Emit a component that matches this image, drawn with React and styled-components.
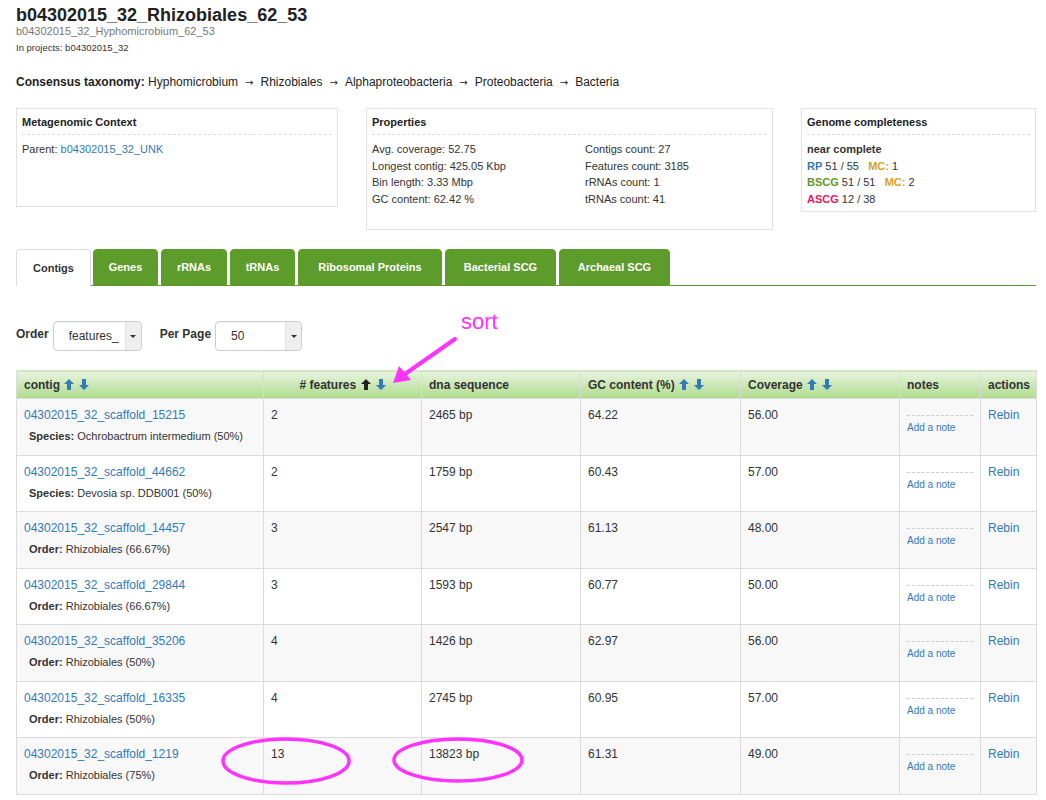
import React from "react";
import styled, { createGlobalStyle } from "styled-components";

const Global = createGlobalStyle`
  html, body { margin: 0; padding: 0; background: #fff; }
  body { font-family: "Liberation Sans", Arial, sans-serif; color: #333; font-size: 12px; }
  * { box-sizing: border-box; }
`;

const Page = styled.div`
  position: relative;
  width: 1046px;
  padding: 0 10px 0 16px;
`;

const Title = styled.h1`
  margin: 0;
  padding-top: 4px;
  font-size: 18px;
  font-weight: bold;
  line-height: 22px;
  color: #222;
`;

const Subtitle = styled.div`
  font-size: 11px;
  color: #777;
  line-height: 14px;
  margin-top: -2px;
`;

const Projects = styled.div`
  font-size: 9.5px;
  color: #333;
  line-height: 14px;
  margin-top: 3px;
`;

const Taxonomy = styled.div`
  margin-top: 19px;
  font-size: 12px;
  line-height: 16px;
  color: #222;
  b { font-weight: bold; }
`;

const Arrow = styled.span`
  margin: 0 7px;
  font-family: "DejaVu Sans", sans-serif;
  font-size: 10px;
`;

const Panels = styled.div`
  display: flex;
  align-items: flex-start;
  gap: 28px;
  margin-top: 17px;
`;

const Panel = styled.div`
  width: ${(p) => p.$w}px;
  height: ${(p) => p.$h}px;
  border: 1px solid #e2e2e2;
  padding: 6px 5px;
`;

const PanelTitle = styled.div`
  font-weight: bold;
  font-size: 11px;
  color: #222;
  padding-bottom: 4px;
  border-bottom: 1px dashed #ddd;
  margin-bottom: 6px;
  line-height: 15px;
`;

const Line = styled.div`
  font-size: 11px;
  line-height: 16.5px;
  color: #333;
`;

const PropGrid = styled.div`
  display: grid;
  grid-template-columns: 213px 1fr;
`;

const Link = styled.a`
  color: #337ab7;
  text-decoration: none;
`;

const Tag = styled.b`
  color: ${(p) => p.$c};
  font-weight: bold;
`;

const Tabs = styled.div`
  display: flex;
  align-items: flex-end;
  margin-top: 19px;
  border-bottom: 1px solid #5b9a2a;
  height: 37px;
`;

const Tab = styled.div`
  height: ${(p) => (p.$active ? 37 : 36)}px;
  margin-right: ${(p) => (p.$active ? 2 : 3)}px;
  display: flex;
  align-items: center;
  justify-content: center;
  font-size: 11px;
  font-weight: bold;
  border-radius: 4px 4px 0 0;
  color: ${(p) => (p.$active ? "#333" : "#fff")};
  background: ${(p) => (p.$active ? "#fff" : "#5d9b2b")};
  border: 1px solid ${(p) => (p.$active ? "#ddd" : "#5d9b2b")};
  border-bottom: ${(p) => (p.$active ? "none" : "1px solid #5d9b2b")};
  margin-bottom: ${(p) => (p.$active ? -1 : 0)}px;
  width: ${(p) => p.$w}px;
`;

const Controls = styled.div`
  display: flex;
  align-items: center;
  margin-top: 35px;
  height: 30px;
`;

const Label = styled.span`
  font-weight: bold;
  font-size: 12px;
  color: #333;
  margin-right: 4px;
  margin-left: ${(p) => p.$ml || 0}px;
  position: relative;
  top: -2px;
`;

const Select = styled.div`
  width: ${(p) => p.$w}px;
  height: 30px;
  border: 1px solid #ccc;
  border-radius: 4px;
  display: flex;
  overflow: hidden;
  box-shadow: inset 0 1px 1px rgba(0,0,0,0.05);
`;

const SelectText = styled.div`
  flex: 1;
  padding: 0 0 0 ${(p) => p.$pl}px;
  display: flex;
  align-items: center;
  font-size: 12px;
  color: #333;
  overflow: hidden;
  white-space: nowrap;
`;

const Caret = styled.div`
  width: 16px;
  background: #eee;
  border-left: 1px solid #e0e0e0;
  display: flex;
  align-items: center;
  justify-content: center;
  &::after {
    content: "";
    border-left: 3px solid transparent;
    border-right: 3px solid transparent;
    border-top: 3px solid #333;
  }
`;

const Table = styled.table`
  margin-top: 19px;
  width: 1020px;
  border-collapse: collapse;
  table-layout: fixed;
  font-size: 12px;
`;

const Th = styled.th`
  height: 28px;
  background: linear-gradient(#e8f4e0, #aedb8c);
  border: 1px solid #dcdcdc;
  border-top-color: #d8e8cc;
  text-align: ${(p) => (p.$center ? "center" : "left")};
  padding: 0 7px;
  font-weight: bold;
  color: #333;
  font-size: 12px;
  white-space: nowrap;
`;

const Tr = styled.tr`
  height: 56.5px;
  background: ${(p) => (p.$odd ? "#f8f8f8" : "#fff")};
`;

const Td = styled.td`
  border: 1px solid #dcdcdc;
  vertical-align: top;
  padding: 9px 7px 0;
  color: #333;
  line-height: 15px;
`;

const Sub = styled.div`
  font-size: 11px;
  margin-top: 6px;
  margin-left: 5px;
  b { font-weight: bold; }
`;

const NoteLine = styled.div`
  border-top: 1px dashed #ccc;
  margin-top: 7px;
  padding-top: 5px;
  font-size: 10px;
  line-height: 14px;
`;

const Overlay = styled.svg`
  position: absolute;
  left: 0;
  top: 0;
  pointer-events: none;
`;

const SortLabel = styled.div`
  position: absolute;
  left: 461px;
  top: 309px;
  font-size: 22px;
  color: #ff33ff;
  font-family: "Liberation Sans", Arial, sans-serif;
`;

const IconWrap = styled.span`
  display: inline-flex;
  gap: 5px;
  margin-left: 1px;
  vertical-align: -1px;
`;

function ArrowIcon({ dir, color }) {
  const d =
    dir === "up"
      ? "M5 0 L10 5 L7 5 L7 11 L3 11 L3 5 L0 5 Z"
      : "M5 11 L10 6 L7 6 L7 0 L3 0 L3 6 L0 6 Z";
  return (
    <svg width="10" height="11" viewBox="0 0 10 11">
      <path d={d} fill={color} />
    </svg>
  );
}

function Sort({ active }) {
  return (
    <IconWrap>
      <ArrowIcon dir="up" color={active ? "#222" : "#337ab7"} />
      <ArrowIcon dir="down" color="#337ab7" />
    </IconWrap>
  );
}

const rows = [
  ["04302015_32_scaffold_15215", "Species:", "Ochrobactrum intermedium (50%)", "2", "2465 bp", "64.22", "56.00"],
  ["04302015_32_scaffold_44662", "Species:", "Devosia sp. DDB001 (50%)", "2", "1759 bp", "60.43", "57.00"],
  ["04302015_32_scaffold_14457", "Order:", "Rhizobiales (66.67%)", "3", "2547 bp", "61.13", "48.00"],
  ["04302015_32_scaffold_29844", "Order:", "Rhizobiales (66.67%)", "3", "1593 bp", "60.77", "50.00"],
  ["04302015_32_scaffold_35206", "Order:", "Rhizobiales (50%)", "4", "1426 bp", "62.97", "56.00"],
  ["04302015_32_scaffold_16335", "Order:", "Rhizobiales (50%)", "4", "2745 bp", "60.95", "57.00"],
  ["04302015_32_scaffold_1219", "Order:", "Rhizobiales (75%)", "13", "13823 bp", "61.31", "49.00"],
];

const tabs = [
  ["Contigs", 75, true],
  ["Genes", 65],
  ["rRNAs", 66],
  ["tRNAs", 65],
  ["Ribosomal Proteins", 144],
  ["Bacterial SCG", 111],
  ["Archaeal SCG", 111],
];

export default function App() {
  return (
    <Page>
      <Global />
      <Title>b04302015_32_Rhizobiales_62_53</Title>
      <Subtitle>b04302015_32_Hyphomicrobium_62_53</Subtitle>
      <Projects>In projects: b04302015_32</Projects>
      <Taxonomy>
        <b>Consensus taxonomy:</b> Hyphomicrobium<Arrow>→</Arrow>Rhizobiales<Arrow>→</Arrow>
        Alphaproteobacteria<Arrow>→</Arrow>Proteobacteria<Arrow>→</Arrow>Bacteria
      </Taxonomy>

      <Panels>
        <Panel $w={322} $h={99}>
          <PanelTitle>Metagenomic Context</PanelTitle>
          <Line>
            Parent: <Link>b04302015_32_UNK</Link>
          </Line>
        </Panel>
        <Panel $w={407} $h={122}>
          <PanelTitle>Properties</PanelTitle>
          <PropGrid>
            <div>
              <Line>Avg. coverage: 52.75</Line>
              <Line>Longest contig: 425.05 Kbp</Line>
              <Line>Bin length: 3.33 Mbp</Line>
              <Line>GC content: 62.42 %</Line>
            </div>
            <div>
              <Line>Contigs count: 27</Line>
              <Line>Features count: 3185</Line>
              <Line>rRNAs count: 1</Line>
              <Line>tRNAs count: 41</Line>
            </div>
          </PropGrid>
        </Panel>
        <Panel $w={235} $h={104}>
          <PanelTitle>Genome completeness</PanelTitle>
          <Line>
            <b>near complete</b>
          </Line>
          <Line>
            <Tag $c="#337ab7">RP</Tag> 51 / 55&nbsp;&nbsp; <Tag $c="#d4a420">MC:</Tag> 1
          </Line>
          <Line>
            <Tag $c="#5d9b2b">BSCG</Tag> 51 / 51&nbsp;&nbsp; <Tag $c="#d4a420">MC:</Tag> 2
          </Line>
          <Line>
            <Tag $c="#e8185a">ASCG</Tag> 12 / 38
          </Line>
        </Panel>
      </Panels>

      <Tabs>
        {tabs.map(([t, w, a]) => (
          <Tab key={t} $w={w} $active={a}>
            {t}
          </Tab>
        ))}
      </Tabs>

      <Controls>
        <Label>Order</Label>
        <Select $w={89}>
          <SelectText $pl={15}>features_</SelectText>
          <Caret />
        </Select>
        <Label $ml={18}>Per Page</Label>
        <Select $w={87}>
          <SelectText $pl={15}>50</SelectText>
          <Caret />
        </Select>
      </Controls>

      <Table>
        <colgroup>
          <col style={{ width: 247 }} />
          <col style={{ width: 158 }} />
          <col style={{ width: 159 }} />
          <col style={{ width: 160 }} />
          <col style={{ width: 159 }} />
          <col style={{ width: 81 }} />
          <col style={{ width: 56 }} />
        </colgroup>
        <thead>
          <tr>
            <Th>
              contig <Sort />
            </Th>
            <Th $center>
              # features <Sort active />
            </Th>
            <Th>dna sequence</Th>
            <Th>
              GC content (%) <Sort />
            </Th>
            <Th>
              Coverage <Sort />
            </Th>
            <Th>notes</Th>
            <Th>actions</Th>
          </tr>
        </thead>
        <tbody>
          {rows.map((r, i) => (
            <Tr key={r[0]} $odd={i % 2 === 0}>
              <Td>
                <Link>{r[0]}</Link>
                <Sub>
                  <b>{r[1]}</b> {r[2]}
                </Sub>
              </Td>
              <Td>{r[3]}</Td>
              <Td>{r[4]}</Td>
              <Td>{r[5]}</Td>
              <Td>{r[6]}</Td>
              <Td>
                <NoteLine>
                  <Link>Add a note</Link>
                </NoteLine>
              </Td>
              <Td>
                <Link>Rebin</Link>
              </Td>
            </Tr>
          ))}
        </tbody>
      </Table>

      <SortLabel>sort</SortLabel>
      <Overlay width="1046" height="800" viewBox="0 0 1046 800">
        <line x1="455" y1="339" x2="405" y2="374" stroke="#ff33ff" strokeWidth="4" strokeLinecap="round" />
        <polygon points="393,383 399,366 411,380" fill="#ff33ff" />
        <ellipse cx="286" cy="761" rx="63" ry="22" fill="none" stroke="#ff33ff" strokeWidth="3.5" />
        <ellipse cx="458" cy="760" rx="64" ry="21" fill="none" stroke="#ff33ff" strokeWidth="3.5" />
      </Overlay>
    </Page>
  );
}
